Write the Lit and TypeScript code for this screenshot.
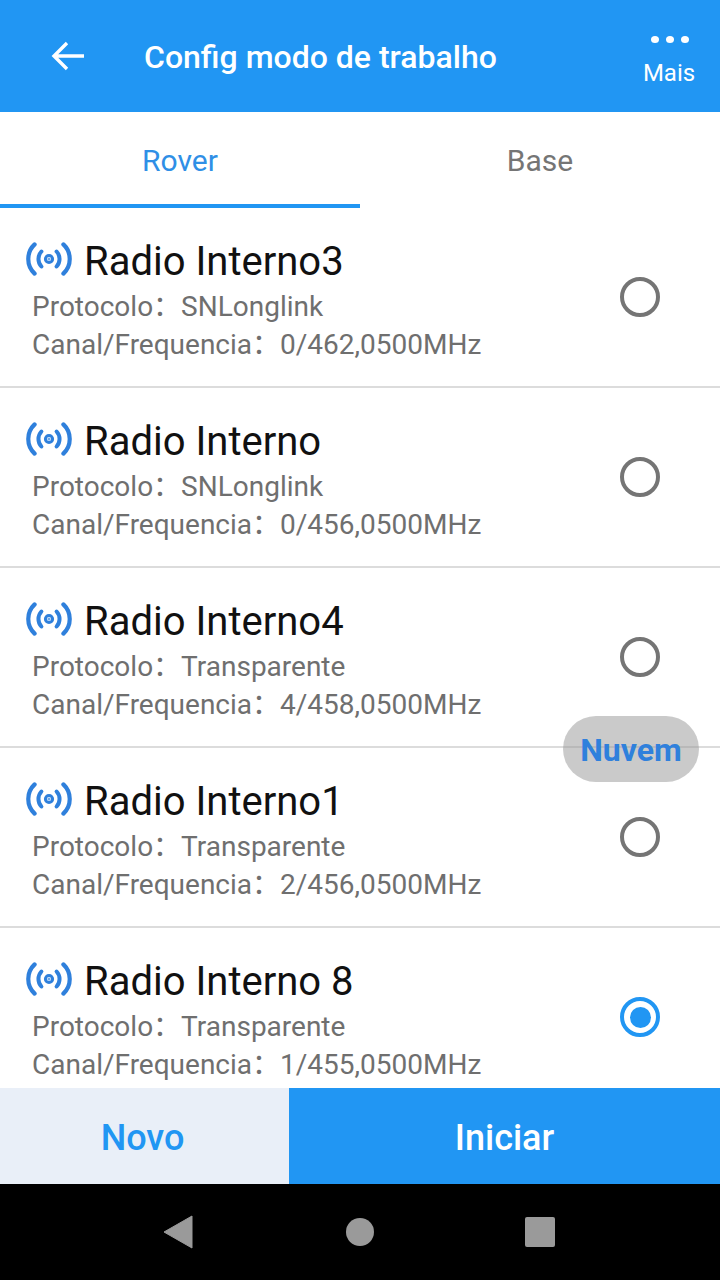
import { LitElement, html, css, svg } from 'lit';
import { customElement } from 'lit/decorators.js';

const radios = [
  { name: 'Radio Interno3', protocol: 'SNLonglink', channel: '0/462,0500MHz', on: false },
  { name: 'Radio Interno', protocol: 'SNLonglink', channel: '0/456,0500MHz', on: false },
  { name: 'Radio Interno4', protocol: 'Transparente', channel: '4/458,0500MHz', on: false },
  { name: 'Radio Interno1', protocol: 'Transparente', channel: '2/456,0500MHz', on: false },
  { name: 'Radio Interno 8', protocol: 'Transparente', channel: '1/455,0500MHz', on: true },
];

const antenna = svg`
  <circle cx="24" cy="17" r="3.6" fill="none" stroke="#2f80dc" stroke-width="3" />
  <circle cx="24" cy="17" r="1.6" fill="#6fa8e6" />
  <path d="M16.4 9.5a11 11 0 0 0 0 15M31.6 9.5a11 11 0 0 1 0 15" fill="none" stroke="#2f80dc" stroke-width="4" stroke-linecap="round" />
  <path d="M9.6 2.4a20 20 0 0 0 0 29.2M38.4 2.4a20 20 0 0 1 0 29.2" fill="none" stroke="#2f80dc" stroke-width="4.2" stroke-linecap="round" />
`;

@customElement('app-root')
export class AppRoot extends LitElement {
  static styles = css`
    :host {
      display: flex;
      flex-direction: column;
      position: relative;
      width: 720px;
      height: 1280px;
      overflow: hidden;
      background: #fff;
      font-family: Roboto, "Noto Sans CJK SC", sans-serif;
    }
    .header {
      flex: none;
      height: 112px;
      background: #2196f3;
      color: #fff;
      display: flex;
      align-items: center;
    }
    .back {
      margin-left: 50px;
      width: 36px;
      height: 32px;
      display: block;
    }
    .title {
      margin-left: 58px;
      flex: 1;
      font-size: 32px;
      font-weight: 500;
      padding-top: 2px;
    }
    .more {
      width: 52px;
      margin-right: 25px;
      display: flex;
      flex-direction: column;
      align-items: center;
      font-size: 24px;
      padding-top: 11px;
    }
    .dots {
      display: flex;
      gap: 7px;
      margin: 0 0 16px;
      position: relative;
      left: 1px;
    }
    .dots i {
      width: 8px;
      height: 7px;
      border-radius: 50%;
      background: #fff;
    }
    .tabs {
      flex: none;
      display: flex;
      height: 96px;
      font-size: 30px;
    }
    .tab {
      flex: 1;
      display: flex;
      align-items: center;
      justify-content: center;
      box-sizing: border-box;
      color: #757575;
    }
    .tab.active {
      color: #2f8fe6;
      border-bottom: 4px solid #2196f3;
      padding-top: 4px;
    }
    .list {
      flex: 1;
      min-height: 0;
      overflow: hidden;
    }
    .row {
      height: 180px;
      box-sizing: border-box;
      border-bottom: 2px solid #dcdcdc;
      display: flex;
      align-items: center;
      position: relative;
    }
    .info {
      flex: 1;
      padding: 31px 0 0 25px;
      align-self: flex-start;
    }
    .name {
      display: flex;
      align-items: center;
      font-size: 40px;
      line-height: 46px;
      color: #111;
      gap: 11px;
    }
    .name svg {
      width: 48px;
      height: 34px;
      flex: none;
      position: relative;
      top: -3px;
    }
    .line {
      font-size: 28px;
      line-height: 38px;
      color: #6f6f6f;
      margin-left: 7px;
    }
    .name + .line {
      margin-top: 3px;
    }
    .radio {
      width: 40px;
      height: 40px;
      box-sizing: border-box;
      border: 4px solid #757575;
      border-radius: 50%;
      margin-right: 60px;
    }
    .radio.on {
      border-color: #2196f3;
      display: flex;
      align-items: center;
      justify-content: center;
    }
    .radio.on::after {
      content: '';
      width: 21px;
      height: 21px;
      border-radius: 50%;
      background: #2196f3;
    }
    .footer {
      flex: none;
      height: 96px;
      display: flex;
      font-size: 36px;
      font-weight: 500;
    }
    .novo {
      width: 289px;
      box-sizing: border-box;
      background: #e9eff8;
      color: #2196f3;
      display: flex;
      align-items: center;
      justify-content: center;
      padding: 4px 4px 0 0;
    }
    .start {
      flex: 1;
      background: #2196f3;
      color: #fff;
      display: flex;
      align-items: center;
      justify-content: center;
      padding-top: 4px;
    }
    .nav {
      flex: none;
      height: 96px;
      background: #000;
    }
    .nav svg {
      width: 720px;
      height: 96px;
      display: block;
    }
    .cloud {
      position: absolute;
      left: 563px;
      top: 716px;
      width: 136px;
      height: 66px;
      box-sizing: border-box;
      padding-top: 2px;
      border-radius: 33px;
      background: rgba(150, 150, 150, 0.5);
      color: #2f80dc;
      font-size: 32px;
      font-weight: 700;
      display: flex;
      align-items: center;
      justify-content: center;
    }
  `;

  render() {
    return html`
      <div class="header">
        <svg class="back" viewBox="0 0 36 32">
          <path d="M34 16H4M17 3 4 16l13 13" fill="none" stroke="#fff" stroke-width="3.4" />
        </svg>
        <div class="title">Config modo de trabalho</div>
        <div class="more">
          <div class="dots"><i></i><i></i><i></i></div>
          <span>Mais</span>
        </div>
      </div>
      <div class="tabs">
        <div class="tab active">Rover</div>
        <div class="tab">Base</div>
      </div>
      <div class="list">
        ${radios.map(r => html`
          <div class="row">
            <div class="info">
              <div class="name">
                <svg viewBox="0 0 48 34">${antenna}</svg>
                <span>${r.name}</span>
              </div>
              <div class="line">Protocolo：${r.protocol}</div>
              <div class="line">Canal/Frequencia：${r.channel}</div>
            </div>
            <div class="radio ${r.on ? 'on' : ''}"></div>
          </div>
        `)}
      </div>
      <div class="footer">
        <div class="novo">Novo</div>
        <div class="start">Iniciar</div>
      </div>
      <div class="nav">
        <svg viewBox="0 0 720 96">
          <path d="M192 32v32l-28-16z" fill="#9a9a9a" stroke="#9a9a9a" stroke-width="1" stroke-linejoin="round" />
          <circle cx="360" cy="48" r="14" fill="#9a9a9a" />
          <rect x="525" y="33" width="30" height="30" rx="2" fill="#9a9a9a" />
        </svg>
      </div>
      <div class="cloud">Nuvem</div>
    `;
  }
}
